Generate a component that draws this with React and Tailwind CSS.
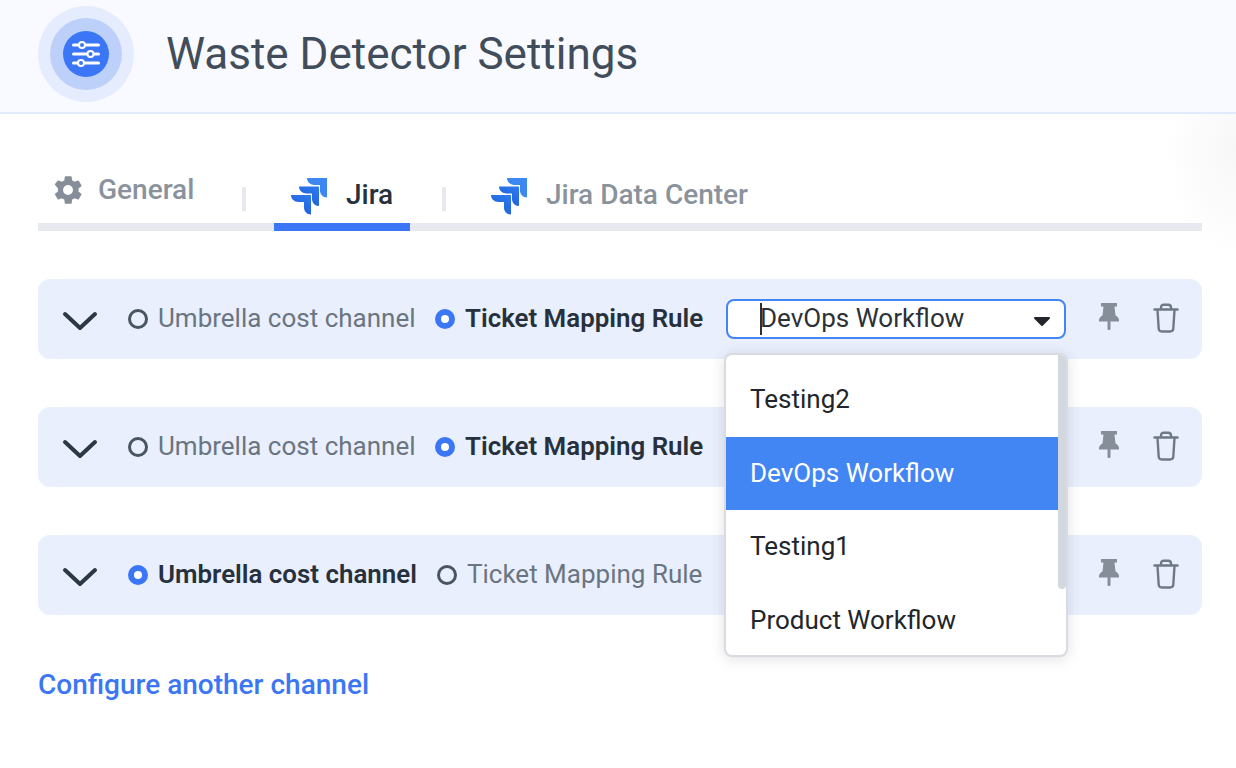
import React from 'react';

function SlidersIcon() {
  return (
    <svg width="30" height="30" viewBox="0 0 30 30" fill="none">
      <path d="M2.500 6h25M2.500 15h25M2.500 24h25" stroke="#fff" strokeWidth="3" strokeLinecap="round" />
      <circle cx="11" cy="6" r="3" fill="#3b76f6" stroke="#fff" strokeWidth="2" />
      <circle cx="19.500" cy="15" r="3" fill="#3b76f6" stroke="#fff" strokeWidth="2" />
      <circle cx="10" cy="24" r="3" fill="#3b76f6" stroke="#fff" strokeWidth="2" />
    </svg>
  );
}

function GearIcon() {
  return (
    <svg width="34" height="34" viewBox="0 0 24 24" fill="#868e99" className="shrink-0">
      <path
        fillRule="evenodd"
        d="M19.4 13c.04-.33.06-.66.06-1s-.02-.67-.07-1l2.03-1.58a.5.5 0 0 0 .12-.63l-1.92-3.32a.5.5 0 0 0-.6-.22l-2.39.96a7 7 0 0 0-1.69-.98l-.36-2.54a.5.5 0 0 0-.5-.42h-3.84a.5.5 0 0 0-.49.42l-.36 2.54c-.6.25-1.17.58-1.69.98l-2.39-.96a.5.5 0 0 0-.6.22L2.79 7.79a.5.5 0 0 0 .12.63L4.94 11c-.05.33-.08.67-.08 1s.03.67.07 1l-2.03 1.58a.5.5 0 0 0-.12.63l1.92 3.32c.12.22.38.3.6.22l2.39-.96c.52.4 1.08.73 1.69.98l.36 2.54c.05.24.25.42.49.42h3.84c.24 0 .45-.18.49-.42l.36-2.54a7 7 0 0 0 1.69-.98l2.39.96c.22.08.48 0 .6-.22l1.92-3.32a.5.5 0 0 0-.12-.63L19.4 13zM12 15.500a3.500 3.500 0 1 1 0-7 3.500 3.500 0 0 1 0 7z"
      />
    </svg>
  );
}

function JiraIcon() {
  return (
    <svg width="38" height="38" viewBox="0 0 38 38" className="shrink-0 mt-[1px]">
      <defs>
        <linearGradient id="jiraA" x1="1" y1="0" x2="0.4" y2="1">
          <stop offset="0" stopColor="#2f7bf0" />
          <stop offset="1" stopColor="#1d5fd6" />
        </linearGradient>
      </defs>
      <path d="M17 1h20v19.500c-3.800 0-7-2.800-7-7V8h-5.500C20.400 8 17 5 17 1z" fill="#3d87f2" />
      <path d="M9 9.500h20v19.500c-3.800 0-7-2.800-7-7v-5.500h-5.500c-4.100 0-7.500-3-7.500-7z" fill="url(#jiraA)" />
      <path d="M1 18h20v19.500c-3.800 0-7-2.800-7-7V25H8.500C4.400 25 1 22 1 18z" fill="url(#jiraA)" />
    </svg>
  );
}

function PinIcon() {
  return (
    <svg width="24" height="30" viewBox="0 0 24 30" fill="#868e99">
      <path d="M4 1h16v3.500h-2.500l1 9c2 1 3.500 2.500 3.500 5v1H2v-1c0-2.500 1.500-4 3.500-5l1-9H4z" />
      <rect x="10.500" y="19" width="3" height="9" rx="1" />
    </svg>
  );
}

function TrashIcon() {
  return (
    <svg width="26" height="30" viewBox="0 0 26 30" fill="none" stroke="#6f7985" strokeWidth="2.400" strokeLinecap="round" strokeLinejoin="round">
      <path d="M1.500 6.500h23" />
      <path d="M8 6V4.500C8 2.800 9.200 1.700 10.800 1.700h4.400c1.600 0 2.800 1.100 2.800 2.800V6" />
      <path d="M4.500 7l1.200 18.500c.1 1.800 1.400 3 3.100 3h8.400c1.700 0 3-1.200 3.100-3L21.500 7" />
    </svg>
  );
}

function Radio({ active }) {
  if (active) {
    return (
      <span className="w-5 h-5 rounded-full bg-[#3b76f6] flex items-center justify-center shrink-0">
        <span className="w-2 h-2 rounded-full bg-white"></span>
      </span>
    );
  }
  return <span className="w-5 h-5 rounded-full border-[3px] border-[#4a5562] shrink-0"></span>;
}

function ChannelOption({ label, active, className }) {
  return (
    <div className={`flex items-center gap-[10px] ${className}`}>
      <Radio active={active} />
      <span className={`mb-[2px] ${active ? 'font-semibold text-[25.900px] text-[#26313d]' : 'text-[#6a7582]'}`}>{label}</span>
    </div>
  );
}

function ChannelRow({ costActive, children }) {
  return (
    <div className="relative h-20 rounded-xl bg-[#e9effd] flex items-center pl-6 text-[26px]">
      <svg width="36" height="22" viewBox="0 0 36 22" fill="none" className="shrink-0 mt-[4px]">
        <path d="M3 4l15 14L33 4" stroke="#2c3744" strokeWidth="4" strokeLinecap="round" strokeLinejoin="round" />
      </svg>
      <ChannelOption
        label="Umbrella cost channel"
        active={costActive}
        className={costActive ? 'ml-[30px] w-[309px]' : 'ml-[30px] w-[308px] -mr-[1px]'}
      />
      <ChannelOption label="Ticket Mapping Rule" active={!costActive} className="" />
      <div className="absolute left-[1059px] top-[23px]">
        <PinIcon />
      </div>
      <div className="absolute left-[1115px] top-[24px]">
        <TrashIcon />
      </div>
      {children}
    </div>
  );
}

const menuItems = ['Testing2', 'DevOps Workflow', 'Testing1', 'Product Workflow'];

export default function App() {
  return (
    <div className="relative w-[1236px] h-[768px] overflow-hidden bg-white font-['Roboto',sans-serif]">
      <div className="absolute right-0 top-[40px] w-[70px] h-[220px] bg-[radial-gradient(ellipse_at_right,#f7f7f8_0%,#ffffff00_70%)]"></div>

      {/* Header */}
      <header className="relative h-[114px] bg-[#f8faff]/90 border-b-2 border-[#e2eafb] pl-[38px] flex items-center">
        <div className="w-24 h-24 mb-[4px] rounded-full bg-[#e5ecfd] flex items-center justify-center shrink-0">
          <div className="w-[72px] h-[72px] rounded-full bg-[#bcd0f9] flex items-center justify-center">
            <div className="w-[46px] h-[46px] rounded-full bg-[#3b76f6] flex items-center justify-center">
              <SlidersIcon />
            </div>
          </div>
        </div>
        <h1 className="ml-8 mb-[4px] text-[44px] font-normal text-[#414d5a]">Waste Detector Settings</h1>
      </header>

      <div className="relative pl-[38px] pr-[34px] pt-[44px]">
        {/* Tabs */}
        <div className="h-[73px] border-b-[8px] border-[#e8e9ee] flex text-[28px] font-medium">
          <div className="w-[204px] h-[65px] flex items-start pl-[13px] pt-[15px] gap-[13px] text-[#8a929c]">
            <GearIcon />
            <span className="leading-[32px] mt-[1px]">General</span>
          </div>
          <div className="w-[4px] h-6 mt-[29px] bg-[#e8e9ee] mr-[28px]"></div>
          <div className="w-[136px] h-[73px] border-b-[8px] border-[#3b76f6] flex items-center gap-[18px] pl-[16px] pt-[10px] text-[#26313d]">
            <JiraIcon />
            <span className="mb-[2px]">Jira</span>
          </div>
          <div className="w-[4px] h-6 mt-[29px] bg-[#e8e9ee] ml-[32px]"></div>
          <div className="h-[65px] flex items-center gap-[18px] ml-[44px] pt-[10px] text-[#8a929c]">
            <JiraIcon />
            <span className="mb-[2px]">Jira Data Center</span>
          </div>
        </div>

        {/* Channels */}
        <div className="flex flex-col gap-12 mt-[48px]">
          <ChannelRow costActive={false}>
            <div className="absolute left-[688px] top-[20px] w-[340px] h-10 rounded-lg border-2 border-[#4286f4] bg-white flex items-center pl-[32px] text-[26px] text-[#2c3138]">
              <span className="absolute left-[32px] top-[2px] w-[2px] h-8 bg-[#2c3138]"></span>
              <span className="mb-[2px]">DevOps Workflow</span>
              <svg width="18" height="11" viewBox="0 0 18 11" className="absolute right-[13px] top-[15px]">
                <path d="M2 2h14l-7 7z" fill="#22262c" stroke="#22262c" strokeWidth="2" strokeLinejoin="round" />
              </svg>
            </div>
          </ChannelRow>
          <ChannelRow costActive={false} />
          <ChannelRow costActive={true} />
        </div>

        <a className="block mt-[49px] text-[28px] font-medium text-[#3b76f6]">Configure another channel</a>
      </div>

      {/* Dropdown menu */}
      <div className="absolute left-[724px] top-[353px] w-[344px] h-[304px] rounded-lg border-2 border-[#d9dbe0] bg-white shadow-[0_2px_14px_rgba(60,70,90,0.16)] overflow-hidden pt-[8px] text-[26px] text-[#22262c]">
        <div className="absolute right-0 top-0 w-[8px] h-[234px] rounded-b-md bg-[#d3d7de]"></div>
        {menuItems.map((item) => (
          <div
            key={item}
            className={`h-[73.500px] flex items-center pl-[24px] mr-[8px] ${item === 'DevOps Workflow' ? 'bg-[#4286f4] text-white' : ''}`}
          >
            {item}
          </div>
        ))}
      </div>
    </div>
  );
}
